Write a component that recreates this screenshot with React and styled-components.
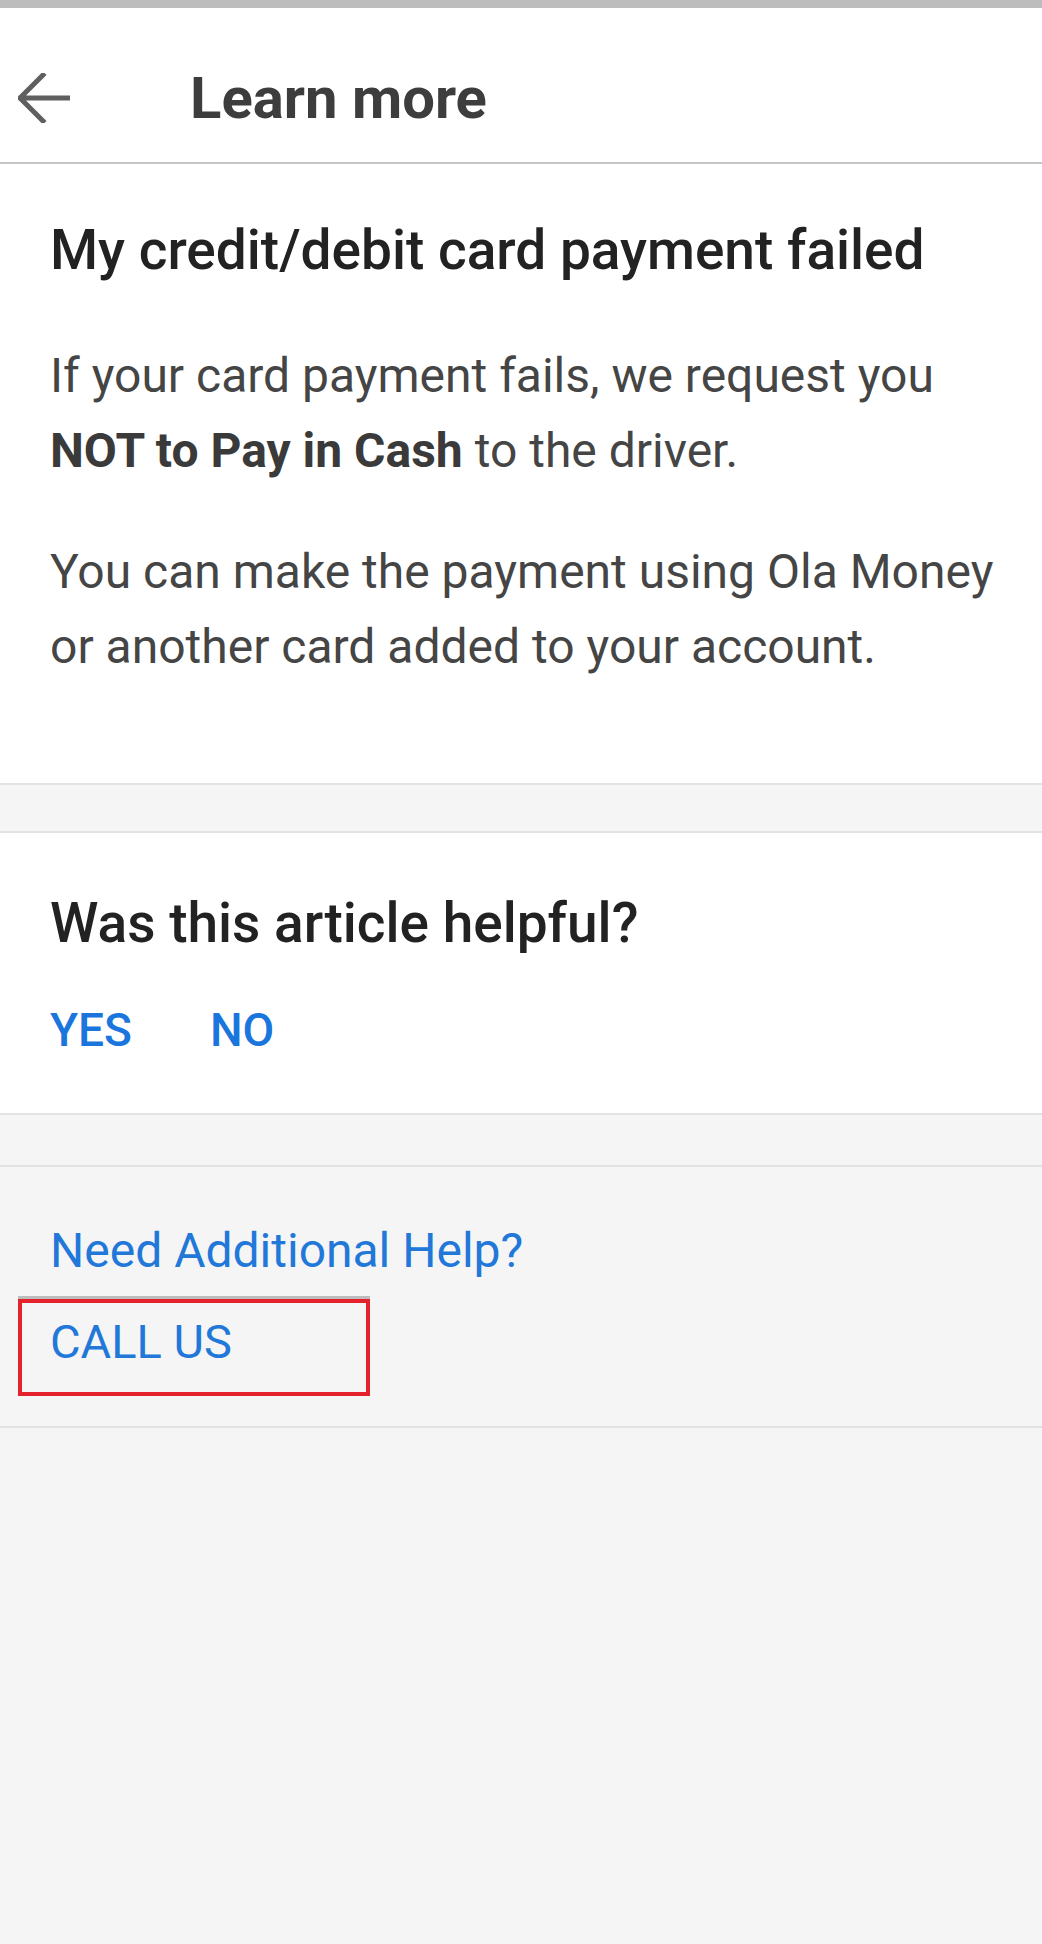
import React from "react";
import styled, { createGlobalStyle } from "styled-components";

const GlobalStyle = createGlobalStyle`
  html, body {
    margin: 0;
    padding: 0;
    background: #f5f5f5;
    font-family: Roboto, "Noto Sans", "Liberation Sans", sans-serif;
  }
`;

const Page = styled.div`
  width: 1042px;
  min-height: 1944px;
  background: #f5f5f5;
  border-top: 8px solid #bdbdbd;
  box-sizing: border-box;
`;

const Header = styled.header`
  display: flex;
  align-items: center;
  gap: 120px;
  height: 156px;
  padding: 26px 0 0 18px;
  box-sizing: border-box;
  background: #fff;
  border-bottom: 2px solid #c6c6c6;
`;

const BackButton = styled.button`
  display: flex;
  padding: 0;
  border: 0;
  background: none;
  cursor: pointer;
`;

const HeaderTitle = styled.h1`
  margin: 0;
  font-size: 58px;
  line-height: 68px;
  font-weight: 700;
  color: #3d3d3d;
`;

const Card = styled.section`
  background: ${(p) => p.bg || "#fff"};
  border-top: ${(p) => (p.noTop ? "0" : "2px solid #e2e2e2")};
  border-bottom: 2px solid #e2e2e2;
  padding: ${(p) => p.pad};
  margin-bottom: ${(p) => p.gapAfter || "0"};
`;

const Heading = styled.h2`
  margin: 0;
  font-size: 55px;
  line-height: 66px;
  font-weight: 500;
  color: #222;
`;

const Para = styled.p`
  margin: ${(p) => p.mt || "0"} 0 0;
  font-size: 48px;
  line-height: 75px;
  color: #454545;

  b {
    font-weight: 700;
    color: #3a3a3a;
  }
`;

const Answers = styled.div`
  display: flex;
  gap: 78px;
  margin-top: 46px;
`;

const Answer = styled.button`
  padding: 0;
  border: 0;
  background: none;
  font-family: inherit;
  font-size: 46px;
  line-height: 56px;
  font-weight: 500;
  color: #1a76dd;
  cursor: pointer;
`;

const HelpText = styled.div`
  font-size: 48px;
  line-height: 56px;
  color: #2278d8;
`;

const CallUs = styled.button`
  display: flex;
  align-items: flex-start;
  width: 352px;
  height: 97px;
  margin: 20px 0 0 -32px;
  padding: 11px 0 0 28px;
  box-sizing: border-box;
  border: 4px solid #e3222b;
  box-shadow: 0 -3px 0 #bdbdbd;
  background: none;
  text-align: left;
  font-family: inherit;
  font-size: 47px;
  line-height: 56px;
  color: #2278d8;
  cursor: pointer;
`;

const ArrowBack = () => (
  <svg width="52" height="50" viewBox="0 0 52 50" fill="none">
    <path
      d="M3 25H50M25 2L2 25L25 48"
      stroke="#5f5f5f"
      strokeWidth="5"
      strokeLinecap="square"
    />
  </svg>
);

export default function App() {
  return (
    <Page>
      <GlobalStyle />
      <Header>
        <BackButton aria-label="Back">
          <ArrowBack />
        </BackButton>
        <HeaderTitle>Learn more</HeaderTitle>
      </Header>

      <Card noTop pad="53px 20px 99px 50px" gapAfter="46px">
        <Heading>My credit/debit card payment failed</Heading>
        <Para mt="55px">
          If your card payment fails, we request you <b>NOT to Pay in Cash</b> to
          the driver.
        </Para>
        <Para mt="46px">
          You can make the payment using Ola Money or another card added to
          your account.
        </Para>
      </Card>

      <Card pad="57px 50px 55px" gapAfter="50px">
        <Heading>Was this article helpful?</Heading>
        <Answers>
          <Answer>YES</Answer>
          <Answer>NO</Answer>
        </Answers>
      </Card>

      <Card bg="#f5f5f5" pad="56px 50px 30px">
        <HelpText>Need Additional Help?</HelpText>
        <CallUs>CALL US</CallUs>
      </Card>
    </Page>
  );
}
